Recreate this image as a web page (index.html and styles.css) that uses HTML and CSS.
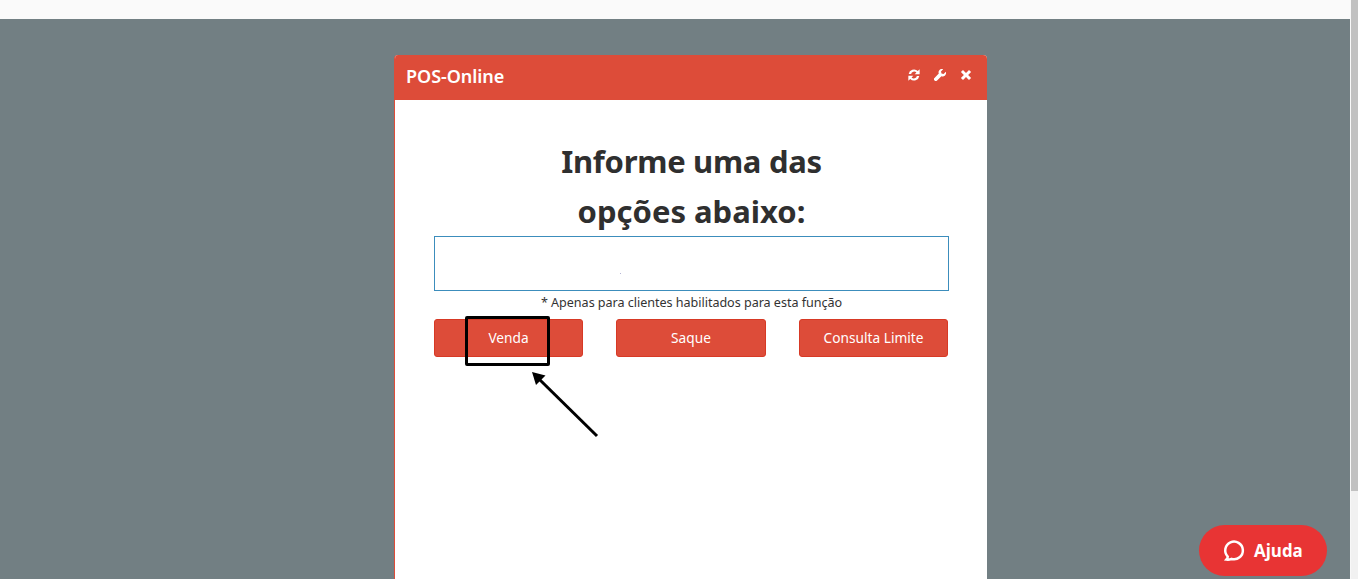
FILE: index.html
```html
<!DOCTYPE html>
<html lang="pt">
<head>
<meta charset="utf-8">
<title>POS-Online</title>
<link rel="stylesheet" href="styles.css">
</head>
<body>
<div class="page">
  <div class="topbar"></div>
  <main class="stage">
    <section class="modal">
      <header class="modal-head">
        <h2 class="modal-title">POS-Online</h2>
        <div class="modal-tools">
          <svg class="tool" viewBox="0.8 0.8 10.4 10.4"><path d="M1.4 5.2A4.7 4.7 0 0 1 9.3 2.5L10.9 1V5.4H6.6L8.1 3.9A2.7 2.7 0 0 0 3.5 5.2ZM10.6 6.8A4.7 4.7 0 0 1 2.7 9.5L1.1 11V6.6H5.4L3.9 8.1A2.7 2.7 0 0 0 8.5 6.8Z"/></svg>
          <svg class="tool" viewBox="0 0 12 12"><path d="M11.8 2.8 9.6 5 7.5 4.5 7 2.4 9.2.2A3.4 3.4 0 0 0 4.8 4.6L.5 8.9A1.7 1.7 0 0 0 3.1 11.5L7.4 7.2A3.4 3.4 0 0 0 11.8 2.8Z"/></svg>
          <svg class="tool" viewBox="0 0 12 12"><path d="M3 .9 6 3.9 9 .9 11.1 3 8.1 6 11.1 9 9 11.1 6 8.1 3 11.1 .9 9 3.9 6 .9 3Z"/></svg>
        </div>
      </header>
      <div class="modal-body">
        <h1 class="headline">Informe uma das<br><span class="headline-wide">opções abaixo:</span></h1>
        <div class="field"><span class="speck"></span></div>
        <p class="note">* Apenas para clientes habilitados para esta função</p>
        <div class="actions">
          <button class="btn" type="button">Venda</button>
          <button class="btn" type="button">Saque</button>
          <button class="btn" type="button">Consulta Limite</button>
        </div>
      </div>
    </section>
  </main>
  <div class="scrollbar"><div class="thumb"></div></div>
</div>
<div class="mark-box"></div>
<svg class="mark-arrow" viewBox="0 0 80 80"><path class="arrow-line" d="M66 65 8 8"/><path class="arrow-head" d="M1 1 14.5 4.5 5 14Z"/></svg>
<button class="help" type="button">
  <svg class="help-icon" viewBox="0 0 24 24"><path d="M4.5 21.5C5.5 20.3 6 19.5 6 18.4A9.2 9.2 0 1 1 10 20.8C8.6 21.4 6.5 21.8 4.5 21.5Z"/></svg>
  <span>Ajuda</span>
</button>
</body>
</html>
```
FILE: styles.css
```css
* { box-sizing: border-box; }
html, body { margin: 0; height: 100%; overflow: hidden; }
body { font-family: "Noto Sans", "Open Sans", sans-serif; color: #333; background: #fff; }

.page { display: grid; grid-template-columns: 1fr 8px; grid-template-rows: 19px 1fr; height: 579px; }
.topbar { grid-column: 1; grid-row: 1; background: #fafafa; }
.stage { grid-column: 1; grid-row: 2; background: #727f83; display: flex; justify-content: center; padding: 36px 0 0 31px; overflow: hidden; min-height: 0; }
.scrollbar { grid-column: 2; grid-row: 1 / 3; background: #f1f1f1; border-left: 1px solid #f8f8f8; }
.thumb { height: 491px; background: #c1c1c1; }

.modal { width: 593px; height: 600px; flex: none; background: #fff; border-left: 1px solid #dd4c39; border-radius: 4px 4px 0 0; overflow: hidden; }
.modal-head { height: 45px; margin-left: -1px; background: #dd4c39; display: flex; align-items: center; justify-content: space-between; padding: 0 15px 3px 12px; color: #fff; }
.modal-title { margin: 0; font-size: 18px; font-weight: 600; letter-spacing: -0.05px; }
.modal-tools { display: flex; gap: 14px; margin-top: -2px; }
.tool { width: 12px; height: 12px; fill: #fff; display: block; }

.modal-body { padding: 36px 38px 0 39px; }
.headline { margin: 0; text-align: center; font-size: 31px; line-height: 50px; font-weight: 700; color: #2f2f2f; letter-spacing: -0.3px; height: 105px; }
.headline-wide { letter-spacing: 0; }
.field { position: relative; height: 55px; width: 515px; border: 1px solid #3c8dbc; background: #fff; margin-top: -5px; }
.speck { position: absolute; left: 185px; top: 36px; width: 1px; height: 1px; background: #b5b5d5; }
.note { margin: 4px 0 0; height: 16px; width: 515px; text-align: center; font-size: 12.6px; line-height: 16px; letter-spacing: -0.04px; color: #333; }
.actions { display: flex; justify-content: space-between; width: 514px; margin-top: 8px; }
.btn { width: 149px; height: 38px; padding: 0 0 1px; background: #dd4c39; border: 1px solid #d73925; border-radius: 3px; color: #fff; font: 400 13.7px "Noto Sans", sans-serif; }
.btn:nth-child(2) { width: 150px; }

.mark-box { position: absolute; left: 465px; top: 316px; width: 85px; height: 50px; border: 3px solid #000; border-radius: 2px; }
.mark-arrow { position: absolute; left: 531px; top: 371px; width: 80px; height: 80px; overflow: visible; }
.arrow-line { stroke: #000; stroke-width: 3; fill: none; }
.arrow-head { fill: #000; }

.help { position: absolute; left: 1199px; top: 525px; width: 128px; height: 51px; border: 0; border-radius: 26px; background: #e83434; color: #fff; display: flex; align-items: center; gap: 9px; padding: 0 0 0 23px; font: 700 16.9px "Open Sans", sans-serif; }
.help-icon { width: 23px; height: 23px; fill: none; stroke: #fff; stroke-width: 2.6; flex: none; }
```
